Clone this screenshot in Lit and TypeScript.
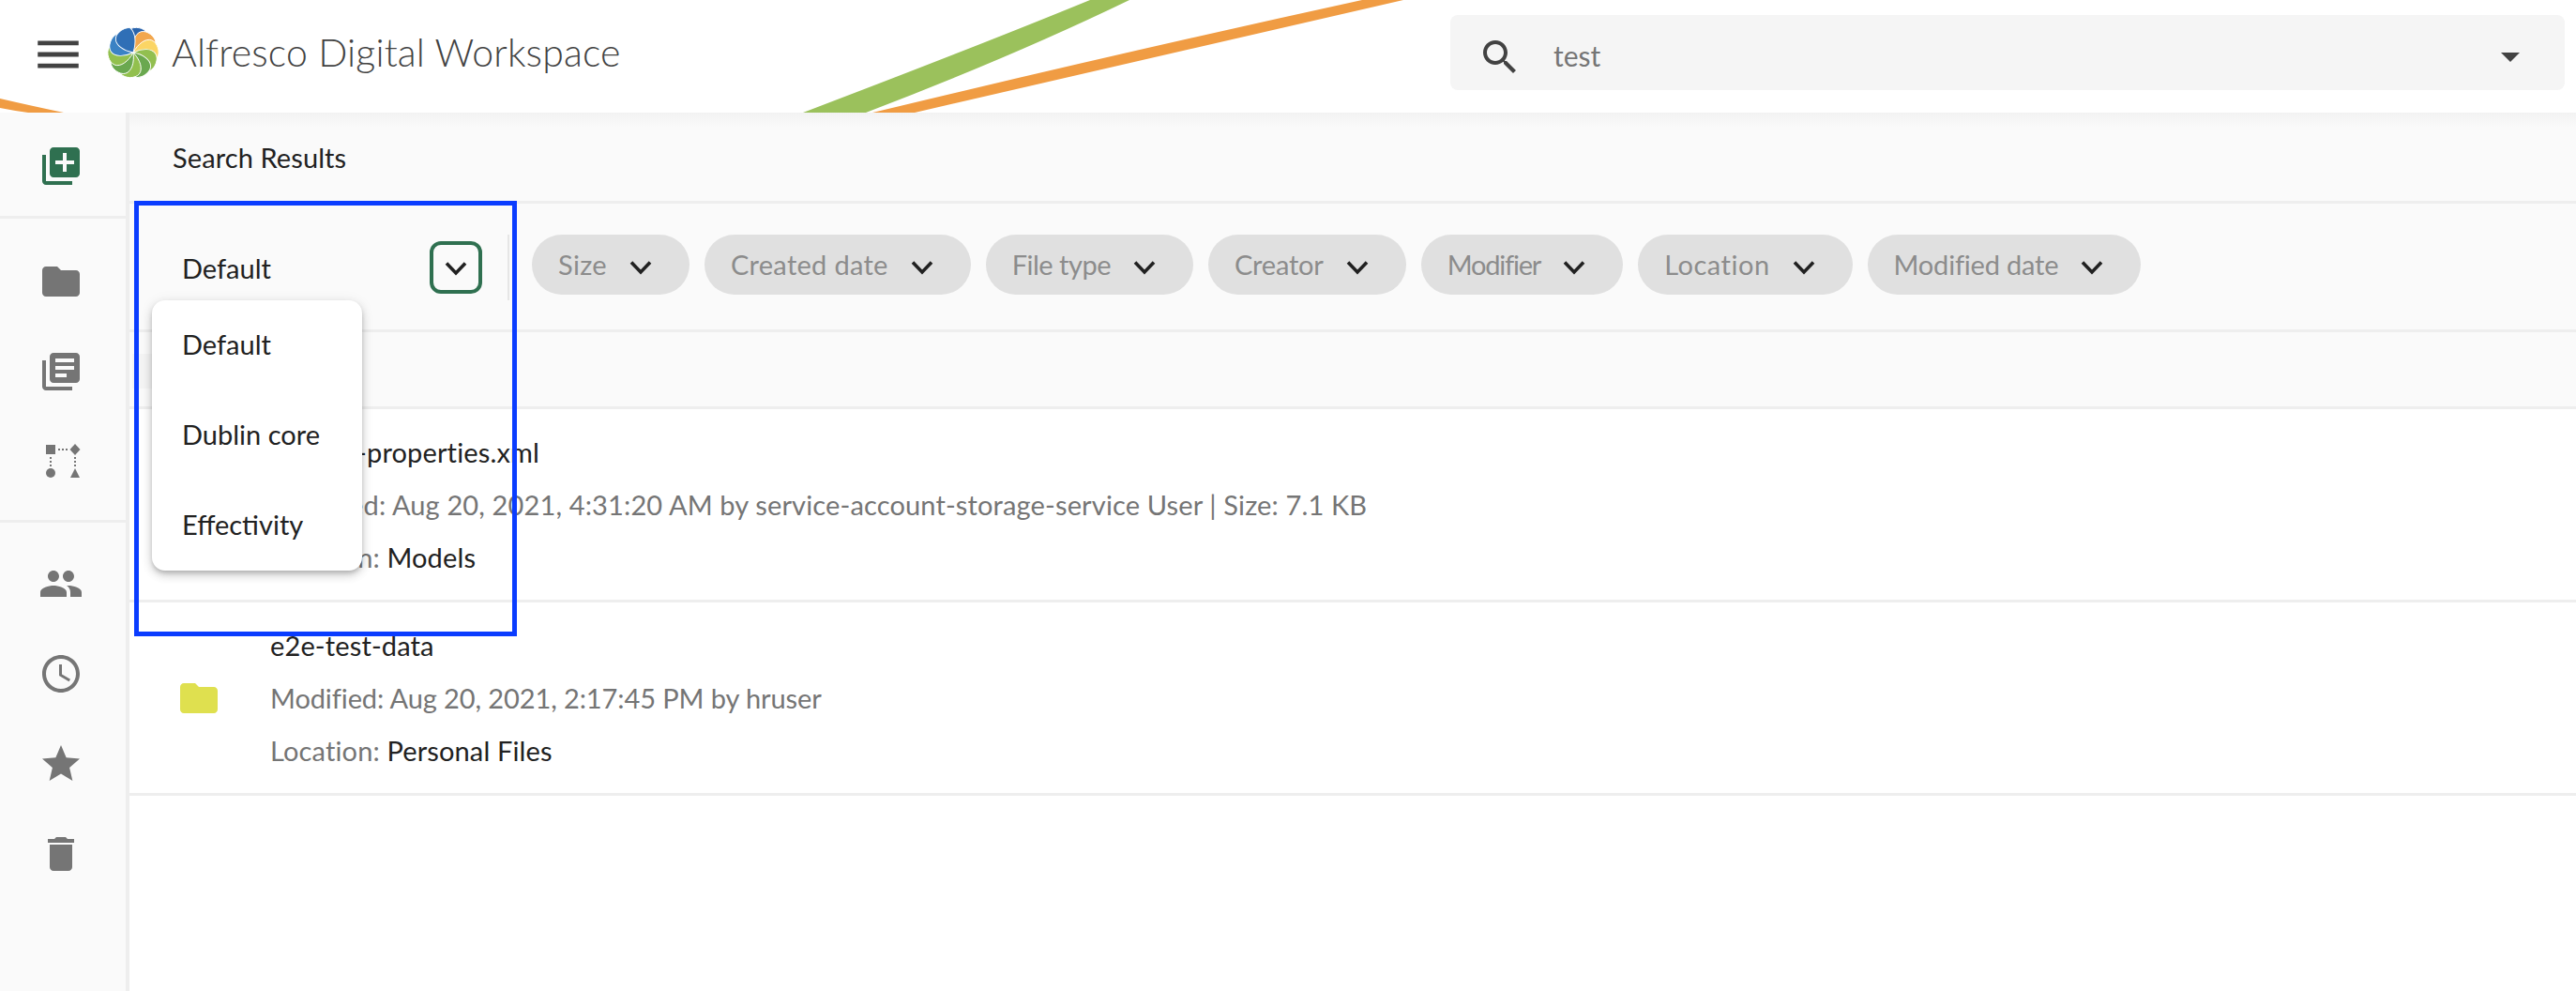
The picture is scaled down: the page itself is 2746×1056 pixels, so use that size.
import { LitElement, html, css, svg } from "lit";
import { customElement } from "lit/decorators.js";

const P = {
  add: "M4 6H2v14c0 1.1.9 2 2 2h14v-2H4V6zm16-4H8c-1.1 0-2 .9-2 2v12c0 1.1.9 2 2 2h12c1.1 0 2-.9 2-2V4c0-1.1-.9-2-2-2zm-1 9h-4v4h-2v-4H9V9h4V5h2v4h4v2z",
  folder: "M10 4H4c-1.1 0-1.99.9-1.99 2L2 18c0 1.1.9 2 2 2h16c1.1 0 2-.9 2-2V8c0-1.1-.9-2-2-2h-8l-2-2z",
  lib: "M4 6H2v14c0 1.1.9 2 2 2h14v-2H4V6zm16-4H8c-1.1 0-2 .9-2 2v12c0 1.1.9 2 2 2h12c1.1 0 2-.9 2-2V4c0-1.1-.9-2-2-2zm-1 9H9V9h10v2zm-4 4H9v-2h6v2zm4-8H9V5h10v2z",
  people: "M16 11c1.66 0 2.99-1.34 2.99-3S17.66 5 16 5c-1.66 0-3 1.34-3 3s1.34 3 3 3zm-8 0c1.66 0 2.99-1.34 2.99-3S9.66 5 8 5C6.34 5 5 6.34 5 8s1.34 3 3 3zm0 2c-2.33 0-7 1.17-7 3.5V19h14v-2.5c0-2.33-4.67-3.5-7-3.5zm8 0c-.29 0-.62.02-.97.05 1.16.84 1.97 1.97 1.97 3.45V19h6v-2.5c0-2.33-4.67-3.5-7-3.5z",
  clock: "M11.99 2C6.47 2 2 6.48 2 12s4.47 10 9.99 10C17.52 22 22 17.52 22 12S17.52 2 11.99 2zM12 20c-4.42 0-8-3.58-8-8s3.58-8 8-8 8 3.58 8 8-3.58 8-8 8zm.5-13H11v6l5.25 3.15.75-1.23-4.5-2.67z",
  star: "M12 17.27L18.18 21l-1.64-7.03L22 9.24l-7.19-.61L12 2 9.19 8.63 2 9.24l5.46 4.73L5.82 21z",
  trash: "M6 19c0 1.1.9 2 2 2h8c1.1 0 2-.9 2-2V7H6v12zM19 4h-3.5l-1-1h-5l-1 1H5v2h14V4z",
  search: "M15.5 14h-.79l-.28-.27C15.41 12.59 16 11.11 16 9.5 16 5.91 13.09 3 9.5 3S3 5.91 3 9.5 5.91 16 9.5 16c1.61 0 3.09-.59 4.23-1.57l.27.28v.79l5 4.99L20.49 19l-4.99-5zm-6 0C7.01 14 5 11.99 5 9.5S7.01 5 9.5 5 14 7.01 14 9.5 11.99 14 9.5 14z",
  menu: "M3 18h18v-2H3v2zm0-5h18v-2H3v2zm0-7v2h18V6H3z",
};

const icon = (d: string, cls = "") =>
  html`<svg class="ic ${cls}" viewBox="0 0 24 24"><path d=${d}></path></svg>`;

const chevron = html`<svg class="chev" viewBox="0 0 24 24"><path d="M2 6.5 12 17 22 6.5" fill="none" stroke="#212121" stroke-width="3.6"></path></svg>`;

const workflow = html`<svg class="ic" viewBox="0 0 48 48">
  <rect x="8" y="6" width="10" height="10"></rect>
  <path d="M39 5l5.5 6-5.5 6-5.5-6z"></path>
  <circle cx="13" cy="36" r="5"></circle>
  <path d="M39 31l5 10H34z"></path>
  <path d="M21 11h10M13 19v11M39 19v10" fill="none" stroke="#757575" stroke-width="2" stroke-dasharray="2 2"></path>
</svg>`;

const petals = ["#2a64ac","#f2a74e","#fbd565","#92bf50","#6aa84f","#92c04e","#6aa84f","#92c04e","#3b82c4","#2f6fb6"];
const logo = html`<svg class="logo" viewBox="-30 -30 60 60">
  ${petals.map((c, i) => svg`<path transform="rotate(${i * 36 + 12})" fill=${c} stroke="#fff" stroke-width=".9"
    d="M0 0C-9-6-14-15-11-21C-8-27 3-29 8-25C11-16 6-7 0 0Z"></path>`)}
</svg>`;

const chips = [
  { label: "Size", ls: 0.3 },
  { label: "Created date", ls: 0.3 },
  { label: "File type", ls: -0.5 },
  { label: "Creator", ls: -0.2 },
  { label: "Modifier", ls: -1.2 },
  { label: "Location", ls: 0.5 },
  { label: "Modified date", ls: -0.2 },
];

@customElement("app-root")
export class AppRoot extends LitElement {
  static styles = css`
    :host { display: block; position: relative; width: 100%; height: 100vh; overflow: hidden; background: #fff;
      font-family: "Lato", "Noto Sans", sans-serif; color: #212121; }
    .ic { display: block; width: 48px; height: 48px; fill: #757575; flex: none; }
    header { position: relative; height: 120px; display: flex; align-items: center; background: #fff; overflow: hidden; }
    .swoosh { position: absolute; left: 0; top: 0; width: 100%; height: 120px; }
    .burger { position: relative; margin-left: 33px; margin-bottom: 5px; width: 58px; height: 58px; fill: #424242; flex: none; }
    .logo { position: relative; width: 60px; height: 60px; margin-left: 21px; margin-bottom: 8px; flex: none; }
    .title { position: relative; margin-left: 11px; font-size: 41px; font-weight: 300; letter-spacing: .15px; color: #424242; white-space: nowrap; margin-bottom: 9px; }
    .search { position: relative; margin-left: auto; margin-right: 12px; margin-bottom: 8px; width: 1188px; height: 80px; box-sizing: border-box;
      background: #f5f5f5; border-radius: 8px; display: flex; align-items: center; padding: 0 48px 0 29px; }
    .search .ic { fill: #424242; margin-top: 10px; }
    .search span { margin-left: 33px; font-size: 30px; color: #757575; margin-top: 6px; flex: 1; }
    .tri { width: 0; height: 0; border-left: 10px solid transparent; border-right: 10px solid transparent; border-top: 10px solid #424242; margin-top: 10px; }
    .body { display: flex; height: 936px; }
    aside { width: 134px; flex: none; background: #fafafa; box-sizing: content-box; border-right: 4px solid #eee; display: flex; flex-direction: column; align-items: stretch; }
    .addw { height: 113px; display: flex; align-items: center; justify-content: center; border-bottom: 3px solid #eee; padding: 0 4px 0 0; box-sizing: border-box; }
    .addw .ic { fill: #2f7050; margin-top: 4px; }
    .nav { display: flex; flex-direction: column; padding: 19px 0 14px; border-bottom: 3px solid #eee; }
    .nav + .nav { border-bottom: 0; padding-top: 17px; }
    .nav div { height: 96px; display: flex; align-items: center; justify-content: center; padding-right: 4px; }
    main { flex: 1; min-width: 0; display: flex; flex-direction: column; }
    .crumb { height: 97px; background: linear-gradient(#f2f2f2, #fafafa 16px); border-bottom: 3px solid #eee; box-sizing: border-box; display: flex; align-items: center; padding-left: 46px; font-size: 29px; letter-spacing: .1px; }
    .filters { height: 137px; box-sizing: border-box; background: #fafafa; border-bottom: 3px solid #eee; display: flex; align-items: flex-start; }
    .sel { width: 405px; height: 70px; margin-top: 33px; flex: none; box-sizing: border-box; border-right: 2px solid #e6e6e6; display: flex; align-items: center; justify-content: space-between; padding: 0 27px 0 56px; font-size: 29px; }
    .selbtn { width: 56px; height: 56px; box-sizing: border-box; border: 4px solid #2f7050; border-radius: 12px; display: flex; align-items: center; justify-content: center; }
    .chips { display: flex; gap: 16px; margin-left: 24px; margin-top: 33px; }
    .chip { height: 64px; border-radius: 32px; background: #e0e0e0; display: flex; align-items: center; padding: 0 40px 0 28px; gap: 24px; font-size: 29px; color: #8c8c8c; white-space: nowrap; }
    .chip span { margin-bottom: 2px; }
    .chev { width: 24px; height: 24px; flex: none; margin-top: 6px; }
    .sel .chev { margin-top: 2px; }
    .head { height: 82px; background: #fafafa; border-bottom: 3px solid #eee; box-sizing: border-box; padding-top: 23px; }
    .head div { width: 120px; height: 37px; margin-left: 3px; background: #f4f4f4; }
    .row { height: 206px; box-sizing: border-box; border-bottom: 3px solid #eee; display: flex; align-items: center; background: #fff; }
    .thumb { width: 150px; flex: none; display: flex; padding-left: 50px; box-sizing: border-box; }
    .rowic { width: 48px; height: 48px; fill: #dfe04f; display: block; }
    .lines { display: flex; flex-direction: column; font-size: 29px; letter-spacing: .14px; color: #757575; }
    .lines div { height: 56px; line-height: 56px; white-space: nowrap; }
    .lines .name { color: #212121; }
    .lines .tight { letter-spacing: -.1px; }
    .lines b { font-weight: 400; color: #212121; }
    .menu { position: absolute; left: 162px; top: 320px; width: 224px; height: 288px; background: #fff; border-radius: 14px;
      box-shadow: 0 3px 5px -1px rgba(0,0,0,.2), 0 5px 10px 1px rgba(0,0,0,.12), 0 2px 14px 1px rgba(0,0,0,.08); }
    .menu div { height: 96px; box-sizing: border-box; display: flex; align-items: center; padding: 0 0 3px 32px; font-size: 29px; }
    .frame { position: absolute; left: 143px; top: 214px; width: 408px; height: 464px; box-sizing: border-box; border: 5px solid #0a3cff; pointer-events: none; }
  `;

  render() {
    return html`
      <header>
        <svg class="swoosh" viewBox="0 0 2746 120" preserveAspectRatio="none">
          <path d="M0 105Q30 112 68 120H30Q15 118 0 115Z" fill="#f09c43"></path>
          <path d="M856 120Q1040 50 1162 0H1204Q1080 60 923 120Z" fill="#9bc15c"></path>
          <path d="M930 120Q1200 55 1452 0H1496L975 120Z" fill="#f09c43"></path>
        </svg>
        <svg class="burger" viewBox="0 0 24 24"><path d=${P.menu}></path></svg>
        ${logo}
        <div class="title">Alfresco Digital Workspace</div>
        <div class="search">
          ${icon(P.search)}
          <span>test</span>
          <i class="tri"></i>
        </div>
      </header>
      <div class="body">
        <aside>
          <div class="addw">${icon(P.add)}</div>
          <div class="nav">
            <div>${icon(P.folder)}</div>
            <div>${icon(P.lib)}</div>
            <div>${workflow}</div>
          </div>
          <div class="nav">
            <div>${icon(P.people)}</div>
            <div>${icon(P.clock)}</div>
            <div>${icon(P.star)}</div>
            <div>${icon(P.trash)}</div>
          </div>
        </aside>
        <main>
          <div class="crumb">Search Results</div>
          <div class="filters">
            <div class="sel">Default <span class="selbtn">${chevron}</span></div>
            <div class="chips">
              ${chips.map((c) => html`<div class="chip"><span style="letter-spacing:${c.ls}px">${c.label}</span>${chevron}</div>`)}
            </div>
          </div>
          <div class="head"><div></div></div>
          <div class="row">
            <div class="thumb"></div>
            <div class="lines">
              <div class="name">models-properties.xml</div>
              <div>Modified: Aug 20, 2021, 4:31:20 AM by service-account-storage-service User | Size: 7.1 KB</div>
              <div>Location: <b>Models</b></div>
            </div>
          </div>
          <div class="row">
            <div class="thumb"><svg class="rowic" viewBox="0 0 24 24"><path d=${P.folder}></path></svg></div>
            <div class="lines">
              <div class="name">e2e-test-data</div>
              <div class="tight">Modified: Aug 20, 2021, 2:17:45 PM by hruser</div>
              <div>Location: <b>Personal Files</b></div>
            </div>
          </div>
        </main>
      </div>
      <div class="menu"><div>Default</div><div>Dublin core</div><div>Effectivity</div></div>
      <div class="frame"></div>
    `;
  }
}
